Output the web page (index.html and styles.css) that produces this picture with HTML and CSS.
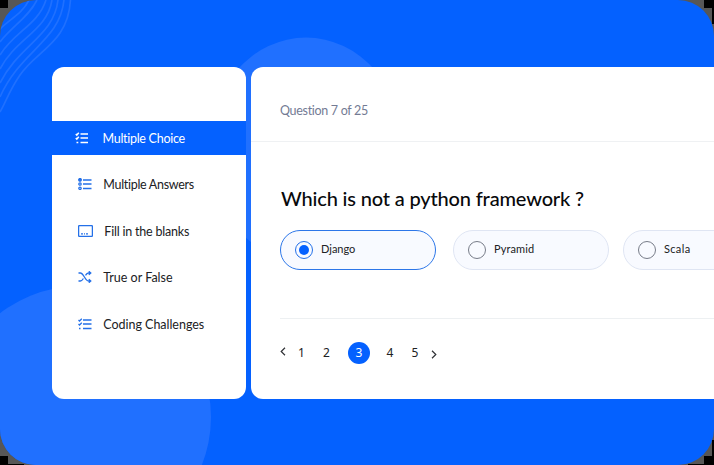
FILE: index.html
```
<!DOCTYPE html>
<html lang="en">
<head>
<meta charset="utf-8">
<title>Python quiz</title>
<link rel="stylesheet" href="styles.css">
</head>
<body>
<svg class="backdrop" viewBox="0 0 714 465" aria-hidden="true">
  <path fill="#000" d="M0 0h8v8H0zM704 0h10v24h-2V8h-8zM0 456h8v8h16v1H0zM704 456h8v-16h2v25h-26v-1h16z"/>
  <clipPath id="frame"><rect width="714" height="465" rx="36"/></clipPath>
  <g clip-path="url(#frame)">
    <rect width="714" height="465" fill="#0461ff"/>
    <g fill="#2070ff">
      <ellipse cx="306" cy="149.5" rx="98" ry="112"/>
      <circle cx="80" cy="417" r="131"/>
    </g>
    <g fill="none" stroke="#1f70ff" stroke-width="1.7">
      <path d="M29 0C22 14 11 18 0 29"/>
      <path d="M37 0C28 18 12 26 0 42"/>
      <path d="M46 0C38 25 14 32 0 55"/>
      <path d="M52 0C47 31 16 38 0 69"/>
      <path d="M58 0C54 36 19 45 0 83"/>
      <path d="M64 0C60 41 20 51 0 97"/>
      <path d="M70.500 0C68 43 37 50 20 75C9 91 6 102 0 112"/>
    </g>
  </g>
</svg>
<div class="app">
  <nav class="sidebar">
    <a class="item active">
      <svg class="icon" viewBox="0 0 14 12"><path class="heavy" d="M5.500 2H13M5.500 6H13M5.500 10.500H13M.8 2l1 1L3.800.8M.8 6l1 1 2-2.200M1.500 10.500h1.800"/></svg>
      <span class="fit-choice">Multiple Choice</span>
    </a>
    <a class="item">
      <svg class="icon" viewBox="0 0 14 12"><path d="M5 2h8.500M5 6h8.500M5 10.500h8.500"/><circle class="solid" cx="2" cy="1.800" r="1.300"/><circle cx="2" cy="6" r="1.200"/><circle cx="2" cy="10.300" r="1.200"/></svg>
      <span class="fit-answers">Multiple Answers</span>
    </a>
    <a class="item">
      <svg class="icon wide" viewBox="0 0 15 12"><rect x=".6" y=".6" width="13.800" height="10.800" rx="1"/><path d="M3 8.800h2M6 8.800h1M8 8.800h2"/></svg>
      <span class="fit-blanks">Fill in the blanks</span>
    </a>
    <a class="item">
      <svg class="icon" viewBox="0 0 14 12"><path d="M.5 2h1.800C5.800 2 7 10 10.500 10h2.300M.5 10h1.800c1.300 0 2.300-1.200 3.100-2.500M7.500 4.300C8.300 3 9.200 2 10.500 2h2.300M10.800.3 12.800 2l-2 1.900M10.800 8.100l2 1.900-2 1.700"/></svg>
      <span class="fit-tf">True or False</span>
    </a>
    <a class="item">
      <svg class="icon" viewBox="0 0 14 12"><path d="M5 2h8.500M5 6h8.500M5 10.500h8.500M.5 2l1 1L3.800.8M.5 6l1 1 2.300-2.200M1 10.500h1.500"/></svg>
      <span class="fit-coding">Coding Challenges</span>
    </a>
  </nav>
  <main class="panel">
    <header class="progress"><span>Question 7 of 25</span></header>
    <section class="question">
      <h1>Which is not a python framework ?</h1>
      <div class="options">
        <label class="option selected"><i class="radio"></i><span>Django</span></label>
        <label class="option"><i class="radio"></i><span class="fit-pyramid">Pyramid</span></label>
        <label class="option last"><i class="radio"></i><span class="fit-scala">Scala</span></label>
      </div>
    </section>
    <footer class="pager">
      <svg class="chevron prev" viewBox="0 0 6 9"><path d="M5 .8 1.200 4.500 5 8.200"/></svg>
      <span class="page">1</span><span class="page two">2</span><span class="page current">3</span><span class="page">4</span><span class="page five">5</span>
      <svg class="chevron next" viewBox="0 0 6 9"><path d="m1 .8 3.800 3.700L1 8.200"/></svg>
    </footer>
  </main>
</div>
</body>
</html>
```
FILE: styles.css
```
* { box-sizing: border-box; }

body {
  margin: 0;
  width: 714px;
  height: 465px;
  overflow: hidden;
  background: #575757;
  font-family: Lato, "Liberation Sans", sans-serif;
  font-variant-ligatures: none;
  color: #202124;
}

.backdrop {
  position: absolute;
  inset: 0;
  width: 714px;
  height: 465px;
}

.app {
  position: relative;
  display: flex;
  gap: 5px;
  height: 399.4px;
  padding: 67px 0 0 52.3px;
}

.sidebar {
  width: 193.7px;
  padding-top: 54px;
  background: #fff;
  border-radius: 12px;
}

.item {
  display: flex;
  align-items: center;
  gap: 11.5px;
  height: 34px;
  margin-bottom: 12.7px;
  padding-left: 25.5px;
  font-size: 12.5px;
  line-height: 16px;
  white-space: nowrap;
}

.item span { padding-top: 2px; }

.item.active {
  margin-bottom: 12px;
  padding-left: 23.2px;
  gap: 13px;
  background: #0461ff;
  color: #fff;
}

.fit-choice { letter-spacing: -0.28px; }
.fit-answers { letter-spacing: -0.3px; }
.fit-blanks { letter-spacing: -0.2px; }
.fit-coding { letter-spacing: -0.03px; }
.fit-pyramid { letter-spacing: 0.12px; }
.fit-scala { letter-spacing: 0.35px; }

.icon {
  width: 14px;
  height: 12px;
  flex: none;
  fill: none;
  stroke: #2470e8;
  stroke-width: 1.3;
}

.icon.wide { width: 15px; }
.icon .solid { fill: #2470e8; }
.active .icon { stroke: #fff; }
.icon .heavy { stroke-width: 1.6; }

.panel {
  flex: 1;
  background: #fff;
  border-radius: 12px 0 0 12px;
  overflow: hidden;
}

.progress {
  height: 75px;
  padding: 36px 0 0 29px;
  border-bottom: 1px solid #eff1f3;
  color: #737b94;
  font-size: 12.5px;
  line-height: 16px;
  letter-spacing: -0.31px;
}

.question {
  height: 176.5px;
  margin-left: 29px;
  border-bottom: 1px solid #edf0f2;
}

h1 {
  margin: 0;
  padding: 43px 0 19.4px 1px;
  color: #08090b;
  font-size: 20px;
  font-weight: 500;
  line-height: 26px;
  letter-spacing: -0.16px;
}

.options {
  display: flex;
  gap: 17px;
}

.option {
  display: flex;
  flex: none;
  align-items: center;
  gap: 8px;
  width: 156px;
  height: 40px;
  padding: 0 0 1px 14px;
  border: 1px solid #dfe5f3;
  border-radius: 20px;
  background: #f8faff;
  font-size: 11px;
  line-height: 14px;
}

.option span { padding-bottom: 1px; }
.option.selected { border-color: #2c76e8; }
.option.last { margin-left: -3px; }

.radio {
  width: 18px;
  height: 18px;
  border: 1px solid #777c88;
  border-radius: 50%;
}

.selected .radio {
  padding: 3px;
  border-color: #2470e8;
  background: #0461ff content-box;
}

.pager {
  display: flex;
  align-items: center;
  height: 69px;
  padding-left: 29px;
  font-family: "Noto Sans", sans-serif;
  font-size: 12px;
  line-height: 16px;
}

.chevron {
  width: 6px;
  height: 9px;
  fill: none;
  stroke: #303236;
  stroke-width: 1.2;
}

.prev { margin: 0 11.5px 3px 0; }
.next { margin: 2px 0 0 12px; }

.page {
  width: 8px;
  text-align: center;
}

.page.two { margin-left: 17px; }
.page.five { margin-left: 17px; }

.page.current {
  width: 22px;
  height: 22px;
  margin: 0 16px 0 17.5px;
  border-radius: 50%;
  background: #0461ff;
  color: #fff;
  line-height: 22px;
}
```
